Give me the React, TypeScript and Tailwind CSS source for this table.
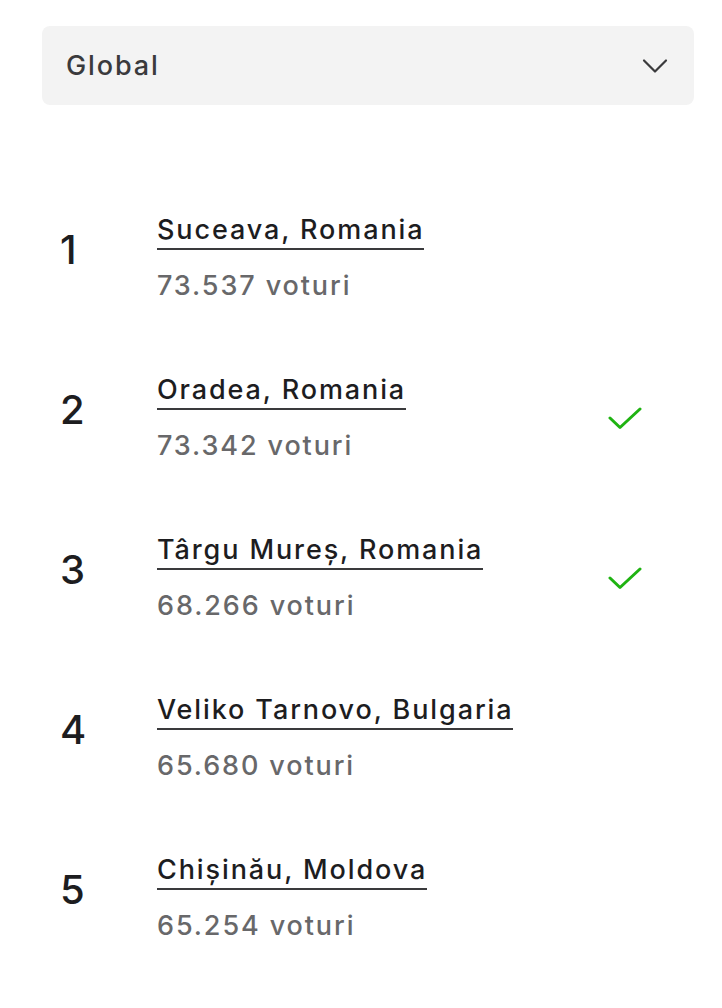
const cities = [
  { rank: 1, name: "Suceava, Romania", votes: "73.537", voted: false },
  { rank: 2, name: "Oradea, Romania", votes: "73.342", voted: true },
  { rank: 3, name: "Târgu Mureș, Romania", votes: "68.266", voted: true },
  { rank: 4, name: "Veliko Tarnovo, Bulgaria", votes: "65.680", voted: false },
  { rank: 5, name: "Chișinău, Moldova", votes: "65.254", voted: false },
];

function Chevron() {
  return (
    <svg width="26" height="16" viewBox="0 0 26 16" fill="none" stroke="#3a3a3c" strokeWidth="2.2" strokeLinecap="round" strokeLinejoin="round">
      <polyline points="2,2.5 13,13.5 24,2.5" />
    </svg>
  );
}

function Tick() {
  return (
    <svg width="34" height="23" viewBox="0 0 34 23" fill="none" stroke="#1fb312" strokeWidth="3" strokeLinecap="round" strokeLinejoin="round">
      <polyline points="2,11 12,20.5 32,2" />
    </svg>
  );
}

export default function App() {
  return (
    <div className="min-h-screen bg-white pl-[42px] pr-[28px] pt-[26px] font-['Inter',sans-serif] text-[27px] font-medium tracking-[0.07em] text-[#1d1d1f]">
      <button className="flex h-[79px] w-full items-center justify-between rounded-lg bg-[#f3f3f3] pl-[24px] pr-[26px] text-left">
        <span className="leading-[34px] text-[#3a3a3c]">Global</span>
        <Chevron />
      </button>

      <ol className="mt-[75px]">
        {cities.map((c) => (
          <li key={c.rank} className="flex items-center pt-[33px] pb-[37px] pr-[52px]">
            <span className="mt-[17px] w-[115px] self-start pl-[18px] text-[40px] leading-[40px] tracking-normal">
              {c.rank}
            </span>
            <div className="flex-1">
              <a href="#" className="block w-fit border-b-2 border-[#3a3a3c] pb-[1px] leading-[34px]">
                {c.name}
              </a>
              <p className="mt-[19px] leading-[34px] text-[#68686a]">{c.votes} voturi</p>
            </div>
            {c.voted && <Tick />}
          </li>
        ))}
      </ol>
    </div>
  );
}
